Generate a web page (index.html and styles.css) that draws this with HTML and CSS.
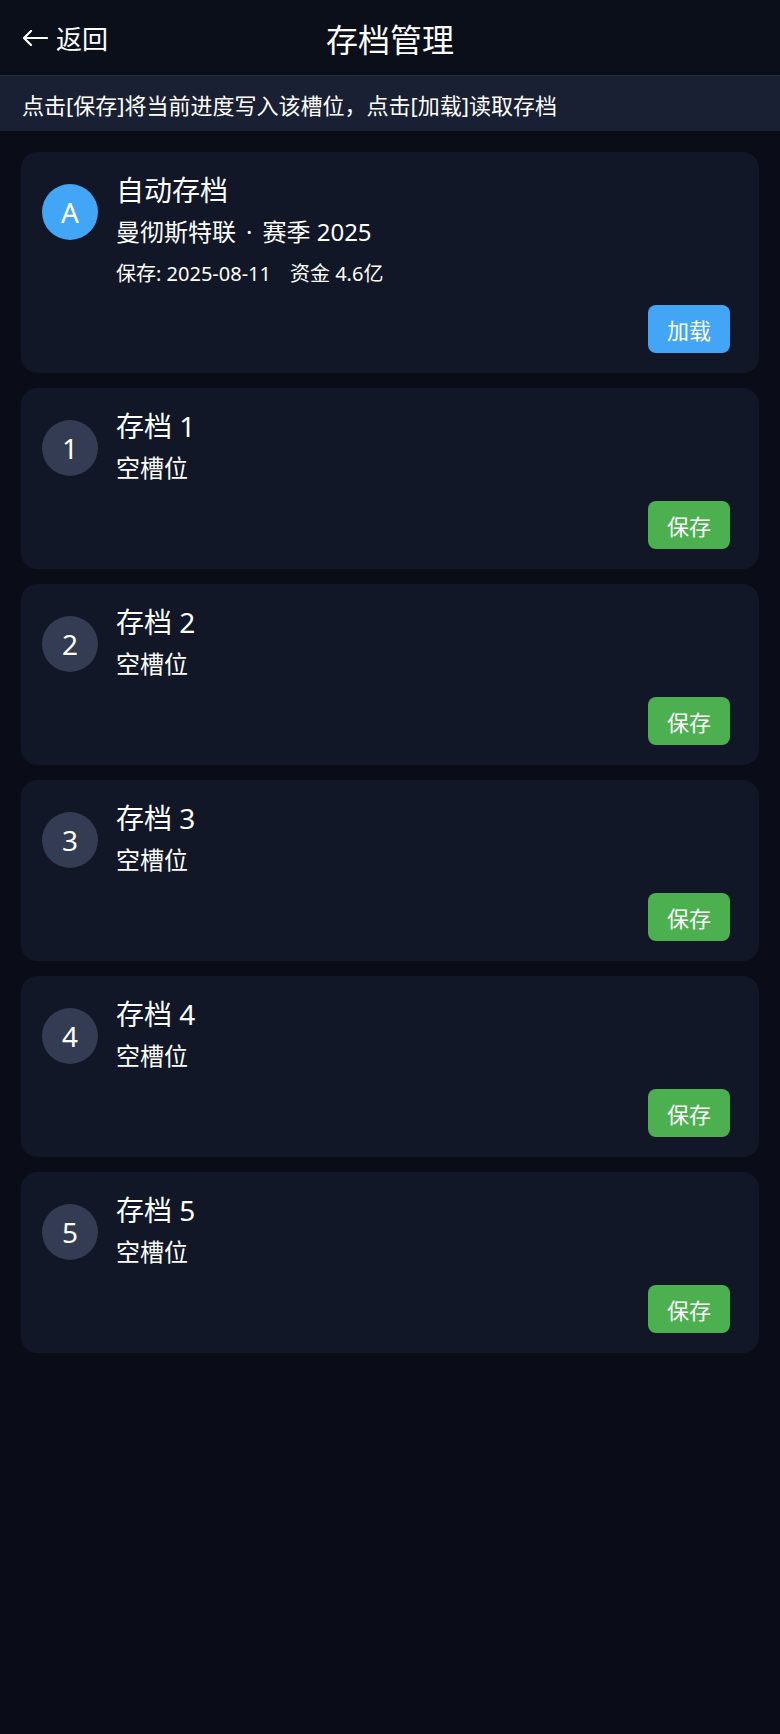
FILE: index.html
```html
<!DOCTYPE html>
<html lang="zh-CN">
<head>
  <meta charset="UTF-8">
  <title>存档管理</title>
  <link rel="stylesheet" href="styles.css">
</head>
<body>
  <div class="topbar">
    <div class="back">
      <svg class="back-icon" width="26" height="16" viewBox="0 0 26 16">
        <path d="M2 8 H25 M9 1 L2 8 L9 15" fill="none" stroke="#fff" stroke-width="2.2" stroke-linecap="round" stroke-linejoin="round"/>
      </svg>
      <span>返回</span>
    </div>
    <h1>存档管理</h1>
  </div>
  <div class="notice">点击[保存]将当前进度写入该槽位，点击[加载]读取存档</div>

  <div class="list">
    <div class="card">
      <div class="row">
        <div class="badge auto">A</div>
        <div class="info">
          <div class="title">自动存档</div>
          <div class="sub">曼彻斯特联<span class="dot">·</span>赛季 2025</div>
          <div class="meta">保存: 2025-08-11<span class="money">资金 4.6亿</span></div>
        </div>
      </div>
      <div class="actions"><button class="btn load">加载</button></div>
    </div>

    <div class="card">
      <div class="row">
        <div class="badge">1</div>
        <div class="info">
          <div class="title">存档 1</div>
          <div class="sub">空槽位</div>
        </div>
      </div>
      <div class="actions"><button class="btn save">保存</button></div>
    </div>

    <div class="card">
      <div class="row">
        <div class="badge">2</div>
        <div class="info">
          <div class="title">存档 2</div>
          <div class="sub">空槽位</div>
        </div>
      </div>
      <div class="actions"><button class="btn save">保存</button></div>
    </div>

    <div class="card">
      <div class="row">
        <div class="badge">3</div>
        <div class="info">
          <div class="title">存档 3</div>
          <div class="sub">空槽位</div>
        </div>
      </div>
      <div class="actions"><button class="btn save">保存</button></div>
    </div>

    <div class="card">
      <div class="row">
        <div class="badge">4</div>
        <div class="info">
          <div class="title">存档 4</div>
          <div class="sub">空槽位</div>
        </div>
      </div>
      <div class="actions"><button class="btn save">保存</button></div>
    </div>

    <div class="card">
      <div class="row">
        <div class="badge">5</div>
        <div class="info">
          <div class="title">存档 5</div>
          <div class="sub">空槽位</div>
        </div>
      </div>
      <div class="actions"><button class="btn save">保存</button></div>
    </div>
  </div>
</body>
</html>
```

FILE: styles.css
```css
body {
  margin: 0;
  background: #0a0d17;
  color: #fff;
  font-family: "Noto Sans", "Noto Sans CJK SC", sans-serif;
  min-height: 100vh;
}
.topbar {
  height: 75px;
  background: #0b0f1a;
  display: flex;
  align-items: center;
  justify-content: center;
  position: relative;
}
.back {
  position: absolute;
  left: 22px;
  top: 0;
  height: 75px;
  display: flex;
  align-items: center;
  gap: 8px;
  font-size: 26px;
}
.back-icon {
  display: block;
}
.topbar h1 {
  margin: 0;
  font-size: 32px;
  font-weight: 400;
}
.notice {
  height: 55px;
  border-top: 1px solid #252c42;
  background: #1a2033;
  display: flex;
  align-items: center;
  padding-left: 22px;
  font-size: 22px;
}
.list {
  padding: 21px 21px;
  display: flex;
  flex-direction: column;
  gap: 15px;
}
.card {
  background: #111726;
  border-radius: 16px;
  padding: 20px 29px 20px 21px;
}
.row {
  display: flex;
  align-items: flex-start;
  gap: 18px;
}
.badge {
  width: 56px;
  height: 56px;
  margin-top: 12px;
  border-radius: 50%;
  background: #333c52;
  display: flex;
  align-items: center;
  justify-content: center;
  font-size: 28px;
  flex-shrink: 0;
}
.badge.auto {
  background: #42a5f5;
}
.title {
  font-size: 28px;
  line-height: 36px;
}
.sub {
  margin-top: 8px;
  font-size: 24px;
  line-height: 32px;
}
.dot {
  margin: 0 10px;
}
.meta {
  margin-top: 12px;
  font-size: 20px;
  line-height: 28px;
}
.money {
  margin-left: 19px;
}
.actions {
  display: flex;
  justify-content: flex-end;
  margin-top: 17px;
}
.btn {
  height: 48px;
  padding: 0 19px;
  border: none;
  border-radius: 8px;
  color: #fff;
  font-family: inherit;
  font-size: 22px;
}
.btn.load {
  background: #42a5f5;
}
.btn.save {
  background: #4caf50;
}
```
